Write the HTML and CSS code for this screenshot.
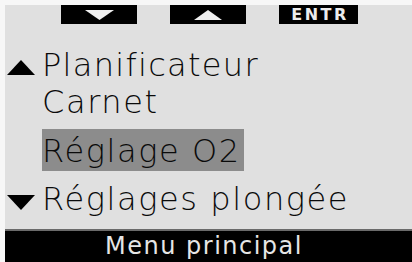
FILE: index.html
```
<!DOCTYPE html>
<html lang="fr">
<head>
<meta charset="utf-8">
<title>Menu principal</title>
<link rel="stylesheet" href="styles.css">
</head>
<body>
<div class="screen">
  <div class="softkeys">
    <div class="key"><svg width="29" height="10" viewBox="0 0 29 10"><polygon points="0,0 29,0 14.5,10" fill="#f0f0f0"/></svg></div>
    <div class="key"><svg width="28" height="10" viewBox="0 0 28 10"><polygon points="14,0 28,10 0,10" fill="#f0f0f0"/></svg></div>
    <div class="key key-text">ENTR</div>
  </div>
  <div class="menu">
    <div class="row row-1">
      <span class="arrow"><svg width="28" height="15" viewBox="0 0 28 15"><polygon points="14,0 28,15 0,15" fill="#000"/></svg></span>
      <span class="label">Planificateur</span>
    </div>
    <div class="row row-2">
      <span class="arrow"></span>
      <span class="label">Carnet</span>
    </div>
    <div class="row row-3">
      <span class="arrow"></span>
      <span class="label selected">Réglage O2</span>
    </div>
    <div class="row row-4">
      <span class="arrow"><svg width="28" height="15" viewBox="0 0 28 15"><polygon points="0,0 28,0 14,15" fill="#000"/></svg></span>
      <span class="label">Réglages plongée</span>
    </div>
  </div>
  <div class="status">Menu principal</div>
</div>
</body>
</html>
```
FILE: styles.css
```
html, body {
  margin: 0;
  padding: 0;
  background: #f7f7f7;
}
body {
  width: 412px;
  height: 262px;
  overflow: hidden;
  font-family: "DejaVu Sans", "Liberation Sans", sans-serif;
}
.screen {
  margin: 5px 0 0 5px;
  width: 407px;
  height: 257px;
  background: #e0e0e0;
  display: flex;
  flex-direction: column;
}
.softkeys {
  display: flex;
  gap: 33px;
  padding-left: 56px;
  height: 19px;
}
.key {
  width: 76px;
  height: 19px;
  background: #000;
  display: flex;
  align-items: center;
  justify-content: center;
}
.key-text {
  color: #ececec;
  font-family: "DejaVu Sans", sans-serif;
  font-weight: bold;
  font-size: 16px;
  letter-spacing: 2.5px;
  line-height: 19px;
  padding-left: 3px;
}
.menu {
  display: flex;
  flex-direction: column;
  padding-top: 23px;
}
.row {
  display: flex;
  align-items: center;
  height: 37px;
  color: #0a0a0a;
  font-size: 32px;
  font-weight: 300;
  letter-spacing: 1.6px;
  line-height: 37px;
  white-space: nowrap;
}
.arrow {
  width: 37px;
  display: flex;
  justify-content: flex-start;
  padding-left: 2px;
  box-sizing: border-box;
}
.row-1 .arrow { margin-top: 4px; }
.row-4 .arrow { margin-top: 5px; }
.row-1 .label { letter-spacing: 1.3px; }
.row-3 {
  height: 42px;
  margin-top: 8px;
}
.row-4 {
  margin-top: 10px;
}
.selected {
  background: #8c8c8c;
  height: 42px;
  line-height: 40px;
  padding-top: 2px;
  padding-right: 3px;
  box-sizing: border-box;
}
.status {
  margin-top: auto;
  border-top: 2px solid #6a6a6a;
  height: 31px;
  background: #000;
  color: #e6e6e6;
  font-size: 24px;
  letter-spacing: 1.5px;
  line-height: 31px;
  text-align: center;
  padding-right: 9px;
}
```
